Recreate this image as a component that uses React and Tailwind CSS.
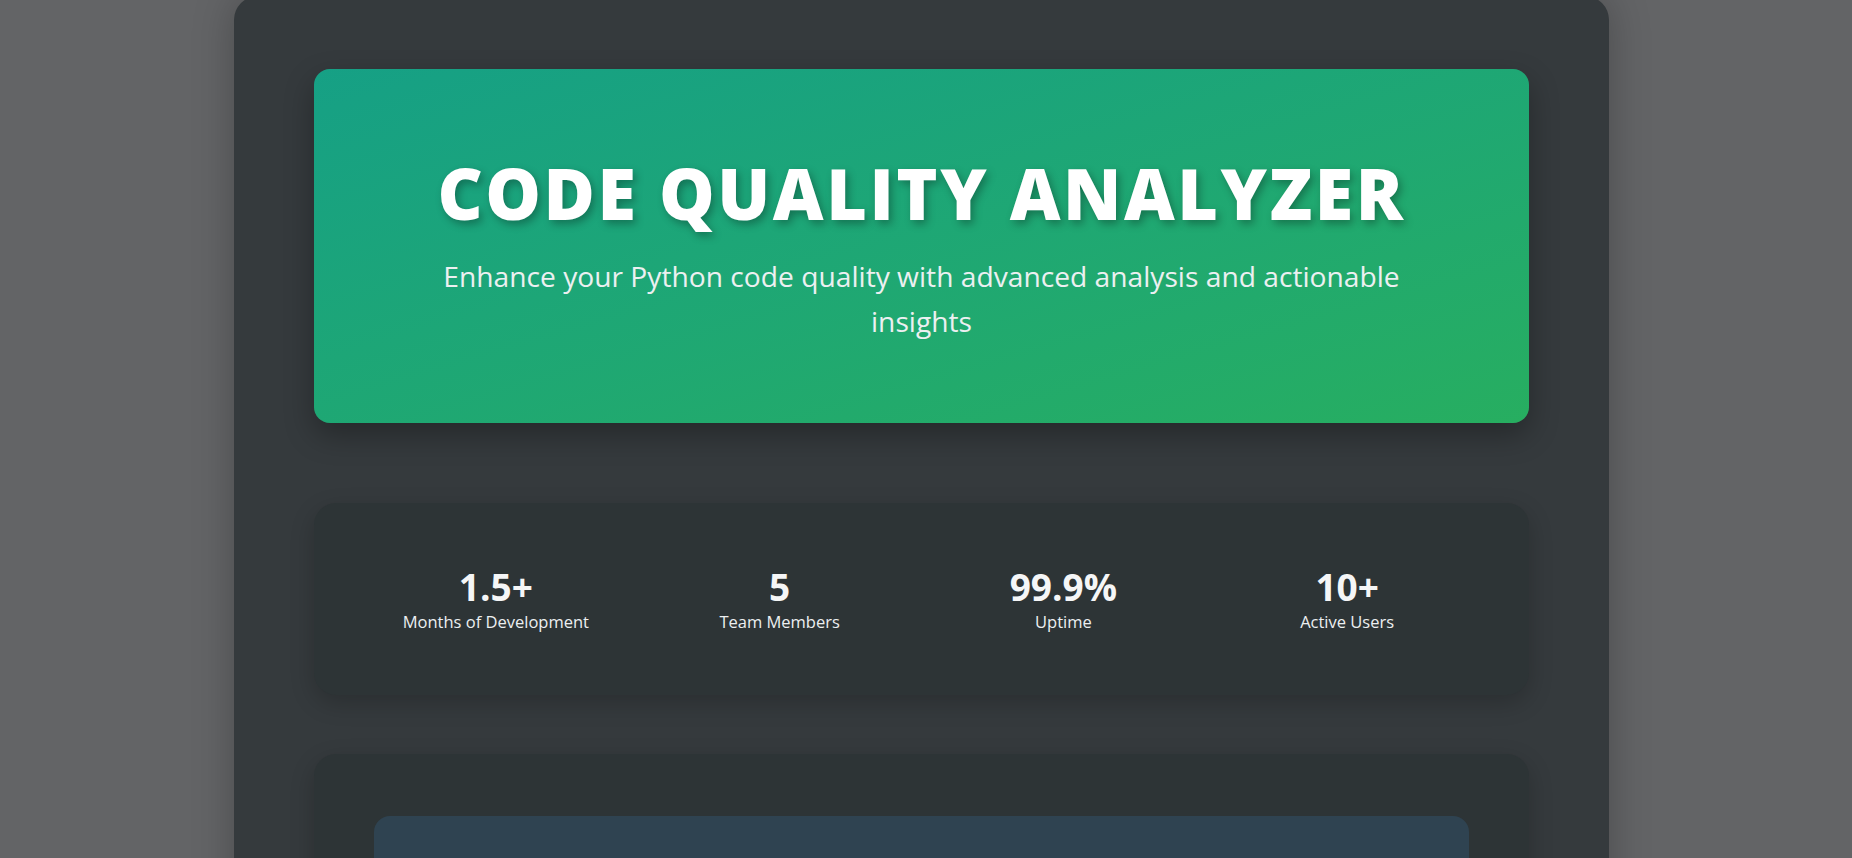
const stats = [
  { value: '1.5+', label: 'Months of Development' },
  { value: '5', label: 'Team Members' },
  { value: '99.9%', label: 'Uptime' },
  { value: '10+', label: 'Active Users' },
];

function StatItem({ value, label }) {
  return (
    <div className="flex flex-col items-center">
      <span className="text-[37px] leading-[46px] font-bold text-[#f5f6f7]">{value}</span>
      <span className="text-[16.5px] leading-[24px] text-[#eceff1]">{label}</span>
    </div>
  );
}

export default function App() {
  return (
    <div className="min-h-screen h-[858px] overflow-hidden bg-[#636466] font-['Open_Sans',sans-serif]">
      <div className="flex justify-center pr-[9px]">
        {/* Main panel */}
        <div className="w-[1375px] -mt-1 rounded-[24px] bg-[#353a3d] px-20 pt-[73px] pb-20 shadow-[0_0_40px_rgba(0,0,0,0.25)]">
          {/* Hero */}
          <div className="rounded-2xl bg-gradient-to-br from-[#16a085] to-[#27ae60] px-12 pt-[82px] pb-[79px] text-center shadow-[0_12px_30px_rgba(0,0,0,0.3)]">
            <h1 className="text-[70px] leading-[84px] font-extrabold tracking-[2.5px] text-white [text-shadow:3px_4px_8px_rgba(0,0,0,0.3)]">
              CODE QUALITY ANALYZER
            </h1>
            <p className="mx-auto mt-[19px] max-w-[1000px] text-[28.2px] leading-[45px] text-[#ecf0f1]">
              Enhance your Python code quality with advanced analysis and actionable insights
            </p>
          </div>

          {/* Stats */}
          <div className="mt-[80px] grid grid-cols-4 rounded-[22px] bg-[#2d3436] px-10 py-[61px] shadow-[0_8px_25px_rgba(0,0,0,0.2)]">
            {stats.map((s) => (
              <StatItem key={s.label} value={s.value} label={s.label} />
            ))}
          </div>

          {/* Next section */}
          <div className="mt-[59px] rounded-[22px] bg-[#2d3436] px-[60px] pt-[62px] pb-[60px] shadow-[0_8px_25px_rgba(0,0,0,0.2)]">
            <div className="h-[300px] rounded-2xl bg-[#2f4351]"></div>
          </div>
        </div>
      </div>
    </div>
  );
}
